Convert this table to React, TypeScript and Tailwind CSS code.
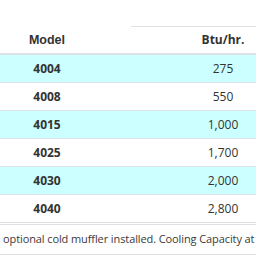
const rows = [
  { model: "4004", btu: "275" },
  { model: "4008", btu: "550" },
  { model: "4015", btu: "1,000" },
  { model: "4025", btu: "1,700" },
  { model: "4030", btu: "2,000" },
  { model: "4040", btu: "2,800" },
];

export default function App() {
  return (
    <div className="w-[256px] h-[256px] overflow-hidden bg-white font-['Open_Sans',sans-serif] text-[12px] text-[#333]">
      <div className="w-[600px] -ml-[37px] pt-[26px]">
        <div className="flex border-b-2 border-[#dee2e6] h-[29px]">
          <div className="w-[168px] flex items-center justify-center pt-px font-bold font-['Liberation_Sans',sans-serif] text-[12.5px]">
            Model
          </div>
          <div className="w-[184px] flex items-center justify-center border-t border-[#dee2e6] font-bold">
            Btu/hr.
          </div>
          <div className="flex-1 border-t border-[#dee2e6]" />
        </div>
        {rows.map((r, i) => (
          <div
            key={r.model}
            className={`flex h-[28px] border-b border-[#dee2e6] ${i % 2 === 0 ? "bg-[#ccffff]" : "bg-white"}`}
          >
            <div className="w-[168px] flex items-center justify-center font-bold">
              {r.model}
            </div>
            <div className="w-[184px] flex items-center justify-center">
              {r.btu}
            </div>
            <div className="flex-1" />
          </div>
        ))}
      </div>
      <div className="mt-px h-[31px] border-y border-[#dee2e6] flex items-center pl-[3px] whitespace-nowrap text-[11px] tracking-[-0.1px] text-[#3a3a3a]">
        optional cold muffler installed. Cooling Capacity at
      </div>
    </div>
  );
}
